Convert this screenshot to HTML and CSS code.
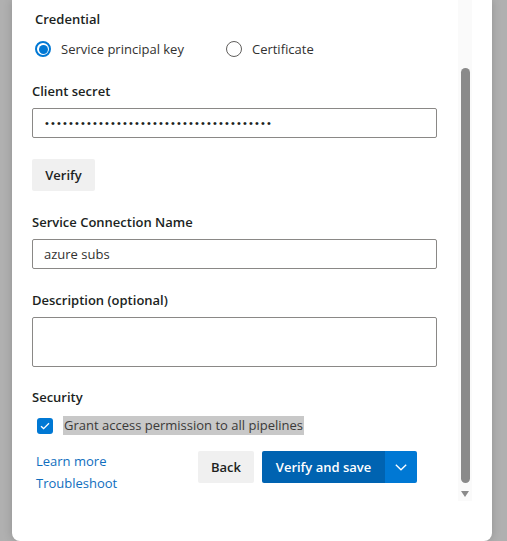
FILE: index.html
```html
<!DOCTYPE html>
<html lang="en">
<head>
<meta charset="utf-8">
<title>Service connection</title>
<link rel="stylesheet" href="styles.css">
</head>
<body>
<div class="panel">
  <div class="content">
    <div class="credential">
      <div class="label">Credential</div>
      <div class="radios">
        <span class="radio-item"><span class="radio checked"></span>Service principal key</span>
        <span class="radio-item"><span class="radio"></span>Certificate</span>
      </div>
    </div>

    <div class="label field-label first">Client secret</div>
    <div class="input"><span class="dots">••••••••••••••••••••••••••••••••••••••</span></div>

    <button class="btn btn-default verify">Verify</button>

    <div class="label field-label">Service Connection Name</div>
    <div class="input"><span class="value">azure subs</span></div>

    <div class="label field-label">Description (optional)</div>
    <div class="input textarea"></div>

    <div class="label field-label security">Security</div>
    <div class="check-row">
      <span class="checkbox">
        <svg width="10" height="8" viewBox="0 0 10 8"><path d="M1 4.2 L3.6 6.6 L9 1.2" fill="none" stroke="#fff" stroke-width="1.3"/></svg>
      </span>
      <span class="check-text">Grant access permission to all pipelines</span>
    </div>

    <div class="footer">
      <div class="links">
        <a class="link">Learn more</a>
        <a class="link">Troubleshoot</a>
      </div>
      <div class="actions">
        <button class="btn btn-default">Back</button>
        <div class="split">
          <button class="btn btn-primary">Verify and save</button>
          <button class="btn btn-drop">
            <svg width="12" height="7" viewBox="0 0 12 7"><path d="M0.8 0.8 L6 5.8 L11.2 0.8" fill="none" stroke="#fff" stroke-width="1.3"/></svg>
          </button>
        </div>
      </div>
    </div>
  </div>

  <div class="scrollbar">
    <div class="thumb"></div>
    <div class="arrow"></div>
  </div>
</div>
</body>
</html>
```

FILE: styles.css
```css
html, body {
  margin: 0;
  padding: 0;
}

body {
  width: 507px;
  height: 541px;
  overflow: hidden;
  background: #b0b0b0;
  font-family: "Segoe UI", "Open Sans", "Noto Sans", sans-serif;
  font-size: 13px;
  line-height: 20px;
  color: #201f1e;
}

.panel {
  margin-left: 12px;
  width: 480px;
  height: 541px;
  background: #fff;
  border-radius: 0 0 8px 8px;
  box-shadow: 0 0 10px rgba(0, 0, 0, 0.18);
  display: flex;
  padding: 0 20px;
  box-sizing: border-box;
}

.content {
  width: 405px;
  display: flex;
  flex-direction: column;
  align-items: flex-start;
  padding-top: 9px;
}

.label {
  font-weight: 600;
  color: #201f1e;
}

.credential {
  padding-left: 3px;
}

.radios {
  display: flex;
  margin-top: 10px;
  height: 20px;
  align-items: center;
}

.radio-item {
  display: flex;
  align-items: center;
  color: #323130;
  margin-right: 42px;
}

.radio {
  width: 16px;
  height: 16px;
  box-sizing: border-box;
  border: 1px solid #605e5c;
  border-radius: 50%;
  margin-right: 10px;
  display: inline-block;
  position: relative;
}

.radio.checked {
  border: 2px solid #0078d4;
}

.radio.checked::after {
  content: "";
  position: absolute;
  left: 1.5px;
  top: 1.5px;
  width: 9px;
  height: 9px;
  border-radius: 50%;
  background: #0078d4;
}

.field-label {
  margin-top: 21px;
  margin-bottom: 7px;
}

.field-label.first {
  margin-top: 22px;
}

.input {
  width: 405px;
  height: 30px;
  box-sizing: border-box;
  border: 1px solid #8a8886;
  border-radius: 2px;
  display: flex;
  align-items: center;
  padding: 0 11px;
  color: #323130;
}

.textarea {
  height: 50px;
}

.dots {
  font-family: "Liberation Sans", sans-serif;
  font-size: 11px;
  letter-spacing: 2.15px;
  color: #201f1e;
  padding-left: 1px;
}

.btn {
  font-family: inherit;
  font-size: 13px;
  font-weight: 600;
  height: 32px;
  border: none;
  border-radius: 2px;
  padding: 0 13px;
  margin: 0;
  cursor: pointer;
  line-height: 32px;
}

.btn-default {
  background: #f0f0f0;
  color: #201f1e;
}

.verify {
  margin-top: 21px;
  width: 63px;
  padding: 0;
}

.security {
  margin-top: 20px;
  margin-bottom: 9px;
}

.check-row {
  display: flex;
  align-items: center;
  height: 19px;
  padding-left: 5px;
}

.checkbox {
  width: 16px;
  height: 16px;
  background: #0078d4;
  border-radius: 3px;
  display: flex;
  align-items: center;
  justify-content: center;
  margin-right: 10px;
}

.check-text {
  background: #c8c8c8;
  color: #3b3a39;
  height: 19px;
  line-height: 19px;
  padding: 0 1px;
}

.footer {
  width: 405px;
  display: flex;
  align-items: flex-start;
  margin-top: 15px;
}

.links {
  display: flex;
  flex-direction: column;
  padding-left: 4px;
  padding-top: 0;
  width: 162px;
  line-height: 22px;
}

.link {
  color: #106ebe;
  text-decoration: none;
}

.actions {
  display: flex;
  gap: 8px;
  margin-top: 1px;
}

.split {
  display: flex;
}

.btn-primary {
  background: #0063b1;
  color: #fff;
  border-radius: 2px 0 0 2px;
  width: 123px;
  padding: 0;
}

.btn-drop {
  background: #0078d4;
  border-radius: 0 2px 2px 0;
  width: 32px;
  padding: 0;
  display: flex;
  align-items: center;
  justify-content: center;
}

.scrollbar {
  margin-left: 21px;
  width: 14px;
  height: 501px;
  background: #fafafa;
  display: flex;
  flex-direction: column;
  align-items: center;
  padding-top: 68px;
  box-sizing: border-box;
}

.thumb {
  width: 9px;
  height: 415px;
  background: #8a8a8a;
  border-radius: 5px;
}

.arrow {
  margin-top: 8px;
  width: 0;
  height: 0;
  border-left: 4px solid transparent;
  border-right: 4px solid transparent;
  border-top: 6px solid #8a8a8a;
}
```
